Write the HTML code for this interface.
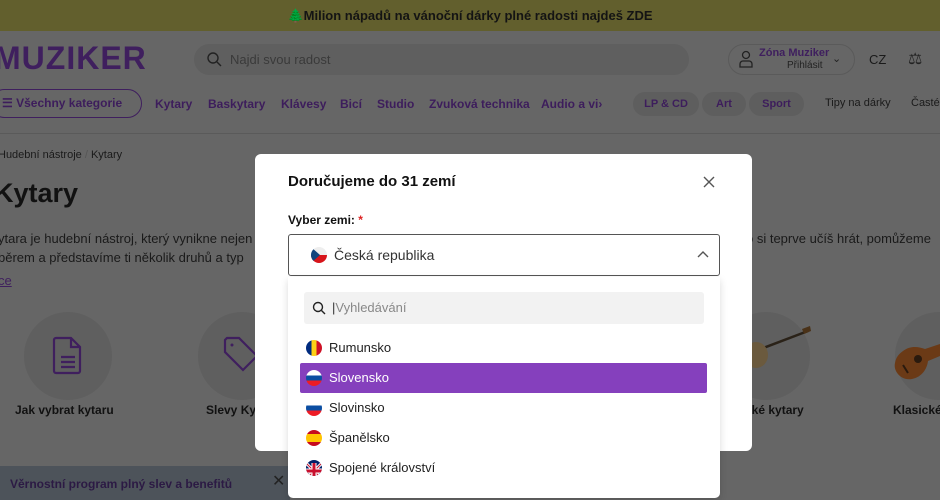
<!DOCTYPE html>
<html><head><meta charset="utf-8"><style>
*{margin:0;padding:0;box-sizing:border-box}
body{width:940px;height:500px;overflow:hidden;background:#666;font-family:"Liberation Sans",sans-serif;position:relative;color:#111}
.a{position:absolute;white-space:nowrap}
.banner{left:0;top:0;width:940px;height:31px;background:#625f2d;text-align:center;font-size:13px;font-weight:bold;line-height:31px;color:#141414}
.nav{font-size:12px;font-weight:bold;color:#3d1d5c}
.pill{background:#5e5e5e;border-radius:15px;height:24px;line-height:24px;font-size:11px;font-weight:bold;color:#3d1d5c;text-align:center}
.circ{width:88px;height:88px;border-radius:50%;background:#5f5f5f}
.modal{left:255px;top:154px;width:497px;height:297px;background:#fff;border-radius:6px}
.opt{left:300px;width:407px;height:30px;font-size:13px;line-height:30px;padding-left:29px;color:#222}
.flag{position:absolute;left:6px;top:7px;width:16px;height:16px;border-radius:50%;overflow:hidden}
</style></head><body>
<div class="a banner">🌲Milion nápadů na vánoční dárky plné radosti najdeš ZDE</div>
<div class="a" style="left:-6px;top:40px;font-size:32px;font-weight:bold;color:#3f1f5e;letter-spacing:1px">MUZIKER</div>
<div class="a" style="left:194px;top:44px;width:495px;height:31px;border-radius:16px;background:#5f5f5f"></div>
<svg class="a" style="left:207px;top:52px" width="15" height="15" viewBox="0 0 15 15"><circle cx="6" cy="6" r="5" fill="none" stroke="#222" stroke-width="1.4"/><path d="M10 10l4 4" stroke="#222" stroke-width="1.4"/></svg>
<div class="a" style="left:230px;top:52px;font-size:13px;color:#3a3a3a">Najdi svou radost</div>
<div class="a" style="left:728px;top:44px;width:127px;height:31px;border-radius:16px;border:1px solid #5a5a5a"></div>
<svg class="a" style="left:738px;top:50px" width="16" height="18" viewBox="0 0 16 18"><circle cx="8" cy="5" r="3.5" fill="none" stroke="#222" stroke-width="1.3"/><path d="M2 17v-3a3 3 0 0 1 3-3h6a3 3 0 0 1 3 3v3z" fill="none" stroke="#222" stroke-width="1.3"/></svg>
<div class="a" style="left:759px;top:47px;font-size:11px;font-weight:bold;color:#3f1f5e">Zóna Muziker</div>
<div class="a" style="left:787px;top:60px;font-size:10px;color:#222">Přihlásit</div>
<div class="a" style="left:832px;top:52px;font-size:11px;color:#222">⌄</div>
<div class="a" style="left:869px;top:52px;font-size:13px;color:#1a1a1a">CZ</div>
<div class="a" style="left:908px;top:49px;font-size:16px;color:#222">⚖</div>
<div class="a" style="left:-10px;top:89px;width:152px;height:29px;border:1px solid #3f1f5e;border-radius:15px"></div>
<div class="a nav" style="left:2px;top:96px">☰ Všechny kategorie</div>
<div class="a nav" style="left:155px;top:97px">Kytary</div>
<div class="a nav" style="left:208px;top:97px">Baskytary</div>
<div class="a nav" style="left:281px;top:97px">Klávesy</div>
<div class="a nav" style="left:340px;top:97px">Bicí</div>
<div class="a nav" style="left:377px;top:97px">Studio</div>
<div class="a nav" style="left:429px;top:97px">Zvuková technika</div>
<div class="a nav" style="left:541px;top:97px">Audio a vi›</div>
<div class="a pill" style="left:633px;top:92px;width:66px">LP &amp; CD</div>
<div class="a pill" style="left:702px;top:92px;width:44px">Art</div>
<div class="a pill" style="left:749px;top:92px;width:55px">Sport</div>
<div class="a" style="left:825px;top:97px;font-size:11px;color:#1a1a1a">Tipy na dárky</div>
<div class="a" style="left:911px;top:97px;font-size:11px;color:#1a1a1a">Časté</div>
<div class="a" style="left:0;top:133px;width:940px;height:1px;background:#5a5a5a"></div>
<div class="a" style="left:-2px;top:149px;font-size:11px;color:#1a1a1a">Hudební nástroje <span style="color:#555">/</span> Kytary</div>
<div class="a" style="left:-6px;top:178px;font-size:27px;font-weight:bold;color:#111">Kytary</div>
<div class="a" style="left:-2px;top:231px;font-size:13px;color:#1a1a1a">ytara je hudební nástroj, který vynikne nejen</div>
<div class="a" style="left:-2px;top:250px;font-size:13px;color:#1a1a1a">běrem a představíme ti několik druhů a typ</div>
<div class="a" style="left:-2px;top:273px;font-size:13px;color:#3f1f5e;text-decoration:underline">ce</div>
<div class="a" style="left:746px;top:231px;font-size:13px;color:#1a1a1a">o si teprve učíš hrát, pomůžeme</div>
<div class="a circ" style="left:24px;top:312px"></div>
<svg class="a" style="left:52px;top:335px" width="32" height="40" viewBox="0 0 32 40"><path d="M4 3h15l9 9v24a2 2 0 0 1-2 2H4a2 2 0 0 1-2-2V5a2 2 0 0 1 2-2z M19 3v9h9 M9 22h14 M9 27h14 M9 32h14" fill="none" stroke="#3f1f5e" stroke-width="2.2"/></svg>
<div class="a circ" style="left:198px;top:312px"></div>
<svg class="a" style="left:222px;top:335px" width="40" height="40" viewBox="0 0 40 40"><path d="M3 5v12l18 18 14-14L17 3H5z" fill="none" stroke="#3f1f5e" stroke-width="2.2"/><circle cx="10" cy="10" r="1.5" fill="#3f1f5e"/></svg>
<div class="a" style="left:15px;top:403px;font-size:12px;font-weight:bold">Jak vybrat kytaru</div>
<div class="a" style="left:206px;top:403px;font-size:12px;font-weight:bold">Slevy Ky</div>
<div class="a circ" style="left:722px;top:312px"></div>
<svg class="a" style="left:740px;top:325px" width="72" height="50" viewBox="0 0 72 50"><path d="M18 25L68 6" stroke="#2a2218" stroke-width="2.5"/><path d="M62 4l8-3 1 5-7 3z" fill="#4a3218"/><ellipse cx="16" cy="30" rx="12" ry="13" fill="#6b5a3e"/></svg>
<div class="a circ" style="left:895px;top:312px"></div>
<svg class="a" style="left:893px;top:335px" width="47" height="52" viewBox="0 0 47 52"><path d="M10 16c8-6 16-4 22-2l15-5v12l-12 5c-1 8-6 16-16 18C8 46 0 36 2 28c1-6 4-9 8-12z" fill="#6b3a16"/><circle cx="25" cy="24" r="4" fill="#2a1a0e"/><path d="M10 30l5 8" stroke="#2a1a0e" stroke-width="2"/></svg>
<div class="a" style="left:745px;top:403px;font-size:12px;font-weight:bold">cké kytary</div>
<div class="a" style="left:893px;top:403px;font-size:12px;font-weight:bold">Klasické</div>
<div class="a" style="left:0;top:466px;width:290px;height:34px;background:#4d535a"></div>
<div class="a" style="left:10px;top:477px;font-size:12px;font-weight:bold;color:#2c1a44">Věrnostní program plný slev a benefitů</div>
<div class="a" style="left:272px;top:471px;font-size:16px;color:#222">✕</div>

<div class="a modal"></div>
<div class="a" style="left:288px;top:173px;font-size:15px;font-weight:bold;color:#111">Doručujeme do 31 zemí</div>
<svg class="a" style="left:703px;top:176px" width="12" height="12" viewBox="0 0 12 12"><path d="M1 1l10 10M11 1L1 11" stroke="#555" stroke-width="1.4"/></svg>
<div class="a" style="left:288px;top:213px;font-size:12px;font-weight:bold;color:#111">Vyber zemi: <span style="color:#d22">*</span></div>
<div class="a" style="left:288px;top:234px;width:432px;height:42px;border:1px solid #555;border-radius:3px;background:#fff"></div>
<div class="a" style="left:311px;top:247px;width:16px;height:16px;border-radius:50%;overflow:hidden;background:linear-gradient(#eee 50%,#d7141a 50%)"><div style="width:0;height:0;border-top:8px solid transparent;border-bottom:8px solid transparent;border-left:9px solid #11457e"></div></div>
<div class="a" style="left:334px;top:247px;font-size:14px;color:#333">Česká republika</div>
<svg class="a" style="left:697px;top:250px" width="12" height="8" viewBox="0 0 12 8"><path d="M1 7l5-5 5 5" fill="none" stroke="#555" stroke-width="1.4"/></svg>
<div class="a" style="left:288px;top:277px;width:432px;height:221px;background:#fff;border-radius:0 0 5px 5px;box-shadow:0 3px 8px rgba(0,0,0,.15)"></div>
<div class="a" style="left:304px;top:292px;width:400px;height:32px;background:#f2f2f2;border-radius:3px"></div>
<svg class="a" style="left:312px;top:301px" width="14" height="14" viewBox="0 0 14 14"><circle cx="6" cy="6" r="4.5" fill="none" stroke="#222" stroke-width="1.4"/><path d="M9.5 9.5l3.5 3.5" stroke="#222" stroke-width="1.4"/></svg>
<div class="a" style="left:332px;top:300px;font-size:13px;color:#888"><span style="color:#333">|</span>Vyhledávání</div>
<div class="a opt" style="top:333px"><span class="flag" style="background:linear-gradient(90deg,#002b7f 33%,#fcd116 33% 66%,#ce1126 66%)"></span>Rumunsko</div>
<div class="a opt" style="top:363px;background:#8540bd;color:#fff;border-radius:2px"><span class="flag" style="background:linear-gradient(#fff 33%,#0b4ea2 33% 66%,#ee1c25 66%)"></span>Slovensko</div>
<div class="a opt" style="top:393px"><span class="flag" style="background:linear-gradient(#fff 33%,#0b4ea2 33% 66%,#ee1c25 66%)"></span>Slovinsko</div>
<div class="a opt" style="top:423px"><span class="flag" style="background:linear-gradient(#c60b1e 25%,#ffc400 25% 75%,#c60b1e 75%)"></span>Španělsko</div>
<div class="a opt" style="top:453px"><span class="flag" style="background:#012169"><svg width="16" height="16" viewBox="0 0 16 16"><path d="M0 0l16 16M16 0L0 16" stroke="#fff" stroke-width="3"/><path d="M0 0l16 16M16 0L0 16" stroke="#c8102e" stroke-width="1"/><path d="M8 0v16M0 8h16" stroke="#fff" stroke-width="5"/><path d="M8 0v16M0 8h16" stroke="#c8102e" stroke-width="3"/></svg></span>Spojené království</div>
</body></html>
